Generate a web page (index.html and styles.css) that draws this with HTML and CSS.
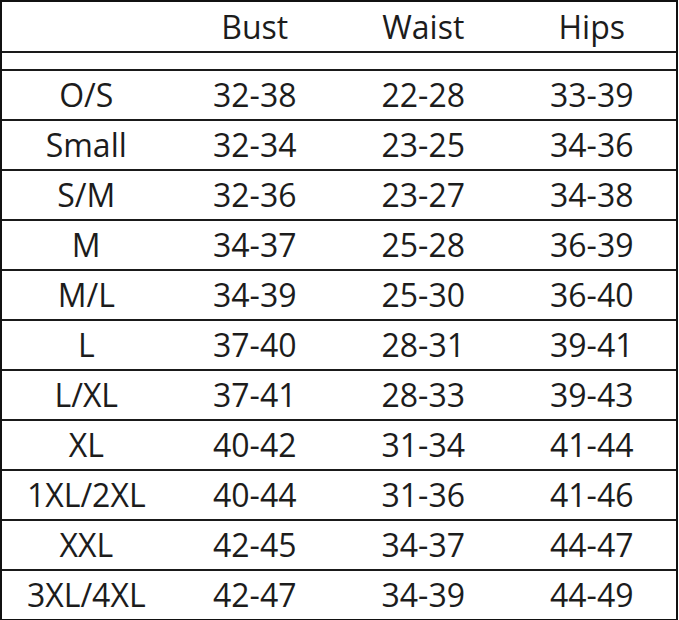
FILE: index.html
```html
<!DOCTYPE html>
<html>
<head>
<meta charset="utf-8">
<link rel="stylesheet" href="styles.css">
</head>
<body>
<div class="chart">
  <div class="row head"><div></div><div>Bust</div><div>Waist</div><div>Hips</div></div>
  <div class="row spacer"></div>
  <div class="row"><div>O/S</div><div>32-38</div><div>22-28</div><div>33-39</div></div>
  <div class="row"><div>Small</div><div>32-34</div><div>23-25</div><div>34-36</div></div>
  <div class="row"><div>S/M</div><div>32-36</div><div>23-27</div><div>34-38</div></div>
  <div class="row"><div>M</div><div>34-37</div><div>25-28</div><div>36-39</div></div>
  <div class="row"><div>M/L</div><div>34-39</div><div>25-30</div><div>36-40</div></div>
  <div class="row"><div>L</div><div>37-40</div><div>28-31</div><div>39-41</div></div>
  <div class="row"><div>L/XL</div><div>37-41</div><div>28-33</div><div>39-43</div></div>
  <div class="row"><div>XL</div><div>40-42</div><div>31-34</div><div>41-44</div></div>
  <div class="row"><div>1XL/2XL</div><div>40-44</div><div>31-36</div><div>41-46</div></div>
  <div class="row"><div>XXL</div><div>42-45</div><div>34-37</div><div>44-47</div></div>
  <div class="row"><div>3XL/4XL</div><div>42-47</div><div>34-39</div><div>44-49</div></div>
</div>
</body>
</html>
```
FILE: styles.css
```css
html, body {
  margin: 0;
  padding: 0;
  background: #fff;
}
.chart {
  box-sizing: border-box;
  width: 678px;
  border: 2px solid #111;
  font-family: "Open Sans", sans-serif;
  font-size: 32px;
  font-weight: 400;
  color: #1c1c1c;
  display: flex;
  flex-direction: column;
}
.row {
  display: grid;
  grid-template-columns: 1fr 1fr 1fr 1fr;
  align-items: center;
  text-align: center;
  height: 50px;
  box-sizing: border-box;
  border-bottom: 2px solid #1a1a1a;
  line-height: 1;
}
.row:last-child {
  border-bottom: none;
  height: 48px;
}
.row.head {
  height: 51px;
}
.row.spacer {
  height: 18px;
}
```
